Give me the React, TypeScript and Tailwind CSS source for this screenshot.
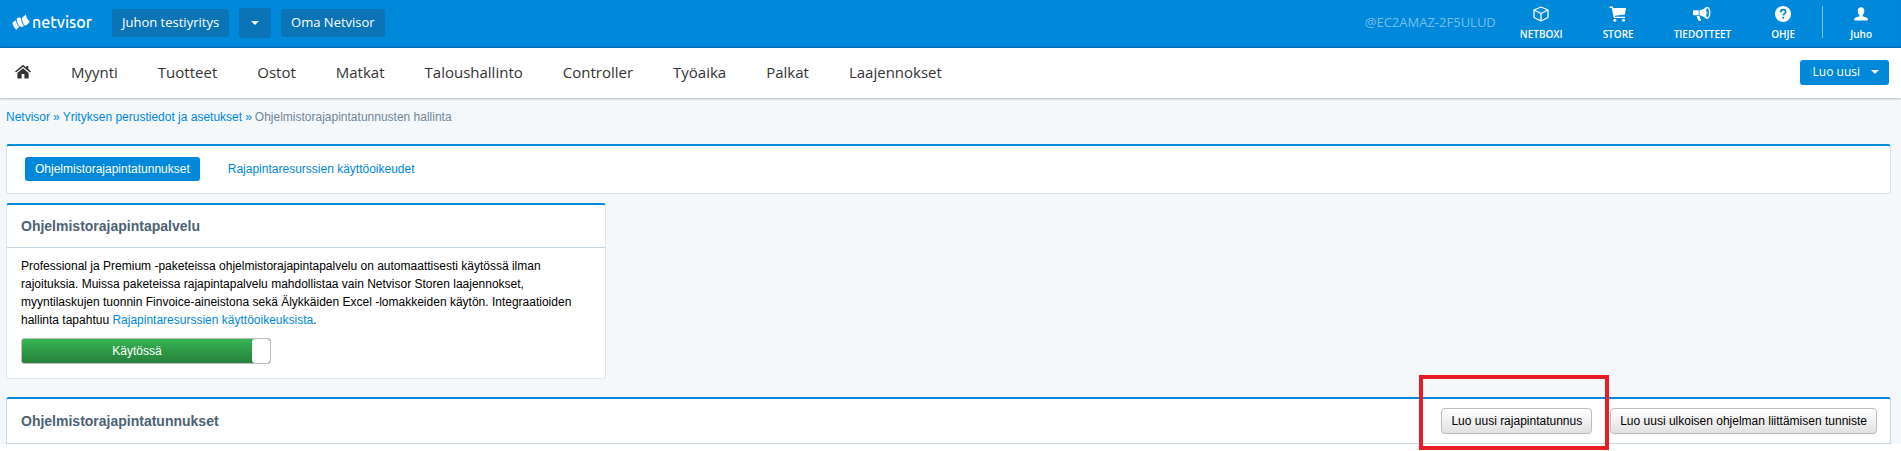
import type { ReactNode } from 'react';

const navItems = ['Myynti', 'Tuotteet', 'Ostot', 'Matkat', 'Taloushallinto', 'Controller', 'Työaika', 'Palkat', 'Laajennokset'];

function Caret() {
  return (
    <svg className="w-2 h-1" viewBox="0 0 8 4" fill="currentColor" aria-hidden="true">
      <path d="M0 0h8L4 4z" />
    </svg>
  );
}

function LogoMark() {
  return (
    <svg className="w-[18px] h-4" viewBox="0 0 18 16" fill="currentColor" aria-hidden="true">
      <path d="M.4 8.600 4 6.200C4.300 9 5.400 11.400 7.200 12.800L4.400 15.700C2.200 14 .8 11.500.4 8.600z" />
      <path d="M4.700 4.600C6.100 3.200 7.800 3 9 4.200c.3 3.200 1.200 5.700 2.900 7.700-1.300 1.200-2.900 1.400-4.100.6C5.900 10.700 4.800 7.900 4.700 4.600z" />
      <path d="M9.800 3.900 13.900.5c.2 2.700 1.400 5 3.700 6.700-.4 1.800-1.900 3.500-4.700 4.500-1.900-2-2.900-4.600-3.100-7.800z" />
    </svg>
  );
}

function HomeIcon() {
  return (
    <svg className="w-4 h-4" viewBox="0 0 16 16" fill="currentColor" aria-hidden="true">
      <path d="M8 .7 0 7.400l1 1.200L8 2.800l7 5.800 1-1.200-2.700-2.300V2h-2v1.400z" />
      <path d="M8 4.300 2.400 9V14.500h4.200V10h2.800v4.500h4.200V9z" />
    </svg>
  );
}

function BoxIcon() {
  return (
    <svg className="w-4 h-4" viewBox="0 0 16 16" fill="none" stroke="currentColor" strokeWidth="1.300" strokeLinejoin="round" aria-hidden="true">
      <path d="M8 1 15 4v7.500L8 15 1 11.500V4zM1 4l7 3.500L15 4M8 7.500V15" />
    </svg>
  );
}

function CartIcon() {
  return (
    <svg className="w-[18px] h-4" viewBox="0 0 18 16" fill="currentColor" aria-hidden="true">
      <path d="M.5.500h3.300l.5 1.500H17l-1 6.500L5.800 9.700l.2 1h10v1.300H4.800L2.700 1.900H.5z" />
      <circle cx="5.800" cy="14.200" r="1.500" />
      <circle cx="14.500" cy="14.200" r="1.500" />
    </svg>
  );
}

function HornIcon() {
  return (
    <svg className="w-[18px] h-4" viewBox="0 0 18 16" fill="currentColor" aria-hidden="true">
      <path d="M1 4.300h4.700v5H1c-.6 0-1-.4-1-1v-3c0-.6.400-1 1-1z" />
      <path d="M6.500 4.200C9 4 11 3 12.800 1.200v11.300C11 10.700 9 9.600 6.500 9.400z" />
      <path d="M3.600 10h2.800l1.800 4.700H5.400z" />
      <path fillRule="evenodd" d="M14.200.7c1.900 0 3.200 2.600 3.200 6.100s-1.300 6.100-3.200 6.100-2.900-2.600-2.900-6.100.9-6.100 2.900-6.100zm.3 1.500c-.9 0-1.500 2-1.500 4.600s.6 4.600 1.500 4.600 1.500-2 1.500-4.600-.6-4.600-1.500-4.600z" />
      <path d="M13.500 5.200c1.300.3 1.300 3 0 3.300z" />
    </svg>
  );
}

function HelpIcon() {
  return (
    <svg className="w-4 h-4" viewBox="0 0 16 16" aria-hidden="true">
      <circle cx="8" cy="8" r="8" fill="currentColor" />
      <path d="M5.600 6.200C5.600 4.600 6.600 3.700 8.100 3.700s2.500.9 2.500 2.200c0 1.700-2.300 1.800-2.300 3.600" fill="none" stroke="#0088db" strokeWidth="1.700" />
      <circle cx="8.200" cy="11.800" r="1.100" fill="#0088db" />
    </svg>
  );
}

function UserIcon() {
  return (
    <svg className="w-4 h-4" viewBox="0 0 16 16" fill="currentColor" aria-hidden="true">
      <path d="M8 1.200c2.100 0 3.300 1.500 3.300 3.700 0 1.700-.7 3.300-1.700 4.100v1.200l4.100 1.500c.8.300 1.100.9 1.100 1.600V14.500H1.200v-1.200c0-.7.300-1.300 1.100-1.600l4.100-1.500V9C5.400 8.200 4.700 6.600 4.700 4.900c0-2.200 1.200-3.700 3.300-3.700z" />
    </svg>
  );
}

function TopLink({ icon, label }: { icon: ReactNode; label: string }) {
  return (
    <a href="#" className="flex flex-col items-center gap-1 text-[10px] leading-4 font-semibold text-white">
      {icon}
      {label}
    </a>
  );
}

function PanelTitle({ children }: { children: ReactNode }) {
  return <h2 className="text-sm leading-5 font-bold text-[#4c6275]">{children}</h2>;
}

function GreyButton({ children }: { children: ReactNode }) {
  return (
    <button className="h-[26px] px-[9px] rounded-sm border border-[#bcbcbc] bg-linear-to-b from-white to-[#e1e1e1] text-xs text-black shadow-xs">
      {children}
    </button>
  );
}

export default function App() {
  return (
    <div className="bg-white pb-2 font-['Liberation_Sans',Arial,sans-serif] text-xs text-black">

      {/* Top bar */}
      <header className="flex h-12 items-center bg-[#0088db] pl-3 pr-[29px] font-['Open_Sans',sans-serif] text-white shadow-[inset_0_-2px_2px_-1px_#0068a8]">
        <a href="#" className="flex w-25 items-center gap-0.5 pb-1">
          <LogoMark />
          <span className="font-[Ubuntu,'Noto_Sans',sans-serif] text-base leading-5 font-medium">netvisor</span>
        </a>
        <div className="flex items-center gap-[10px] pb-0.5 text-[13px] leading-5">
          <button className="h-7 rounded-[3px] bg-[#0a74b6] px-[10px] pb-0.5">Juhon testiyritys</button>
          <button className="flex h-[30px] w-8 items-center justify-center rounded-[3px] bg-[#0a74b6]" aria-label="Vaihda yritys">
            <Caret />
          </button>
          <button className="h-7 rounded-[3px] bg-[#0a74b6] px-[10px] pb-0.5">Oma Netvisor</button>
        </div>
        <div className="ml-auto flex items-center">
          <span className="mr-6 pb-1 text-[13px] leading-5 text-[#77c0ee]">@EC2AMAZ-2F5ULUD</span>
          <div className="flex items-center gap-10">
            <TopLink icon={<BoxIcon />} label="NETBOXI" />
            <TopLink icon={<CartIcon />} label="STORE" />
            <TopLink icon={<HornIcon />} label="TIEDOTTEET" />
            <TopLink icon={<HelpIcon />} label="OHJE" />
          </div>
          <div className="mx-[27px] mb-1 h-8 w-px bg-[#80c3ed]" />
          <TopLink icon={<UserIcon />} label="Juho" />
        </div>
      </header>

      {/* Main navigation */}
      <nav className="relative flex h-[50px] items-center bg-white pb-0.5 pl-[15px] pr-3 font-['Open_Sans',sans-serif] text-[#333] shadow-[0_1px_2px_rgba(0,0,0,0.25)]">
        <a href="#" aria-label="Etusivu"><HomeIcon /></a>
        <div className="ml-10 flex items-center gap-10 text-[15px] leading-5">
          {navItems.map((item) => (
            <a key={item} href="#">{item}</a>
          ))}
        </div>
        <button className="ml-auto flex h-[25px] items-center gap-[11px] rounded-[3px] bg-[#0088db] pl-[13px] pr-[10px] text-[12px] text-white">
          Luo uusi
          <Caret />
        </button>
      </nav>

      <main className="bg-[#f4f8fb] pl-1.5 pr-[10px]">
        {/* Breadcrumb */}
        <div className="flex h-[46px] items-center gap-[3px] pb-2 text-[#0088db]">
          <a href="#">Netvisor</a>
          <span>»</span>
          <a href="#">Yrityksen perustiedot ja asetukset</a>
          <span>»</span>
          <span className="text-[#70879a]">Ohjelmistorajapintatunnusten hallinta</span>
        </div>

        {/* Tabs */}
        <div className="flex h-[50px] items-center gap-[18px] rounded-[3px] border border-t-2 border-[#dde1e4] border-t-[#0088db] bg-white pl-[18px] pb-px">
          <a href="#" className="rounded-[3px] bg-[#0088db] px-[10px] py-1 leading-4 text-white">Ohjelmistorajapintatunnukset</a>
          <a href="#" className="px-[10px] py-1 leading-4 text-[#0088db]">Rajapintaresurssien käyttöoikeudet</a>
        </div>

        {/* Service panel */}
        <section className="mt-[9px] w-150 rounded-[3px] border border-t-2 border-[#dfe7ee] border-t-[#0088db] bg-white">
          <div className="flex h-[43px] items-center border-b border-[#c6d5e0] px-[14px]">
            <PanelTitle>Ohjelmistorajapintapalvelu</PanelTitle>
          </div>
          <div className="px-[14px] pt-[9px] pb-[14px]">
            <p className="leading-[18px]">
              Professional ja Premium -paketeissa ohjelmistorajapintapalvelu on automaattisesti käytössä ilman
              rajoituksia. Muissa paketeissa rajapintapalvelu mahdollistaa vain Netvisor Storen laajennokset,
              myyntilaskujen tuonnin Finvoice-aineistona sekä Älykkäiden Excel -lomakkeiden käytön. Integraatioiden
              hallinta tapahtuu <a href="#" className="text-[#0088db]">Rajapintaresurssien käyttöoikeuksista</a>.
            </p>
            <button role="switch" aria-checked="true" className="mt-[9px] flex h-[26px] w-[250px] overflow-hidden rounded-[3px] border border-[#bdbdbd] bg-linear-to-b from-[#34b452] to-[#27813c] text-white">
              <span className="flex h-full flex-1 items-center justify-center">Käytössä</span>
              <span className="h-full w-[18px] rounded-[3px] bg-white" />
            </button>
          </div>
        </section>

        {/* Identifiers panel */}
        <section className="mt-[18px] rounded-t-[3px] border border-t-2 border-[#cbd8df] border-t-[#0088db] bg-white">
          <div className="flex h-11 items-center justify-between pl-[14px] pr-[13px]">
            <PanelTitle>Ohjelmistorajapintatunnukset</PanelTitle>
            <div className="flex gap-[18px]">
              <div className="relative flex">
                <GreyButton>Luo uusi rajapintatunnus</GreyButton>
                {/* Highlight around the create button */}
                <div className="pointer-events-none absolute -top-[33px] -right-[17px] -bottom-4 -left-[22px] border-4 border-[#e81c22]" />
              </div>
              <GreyButton>Luo uusi ulkoisen ohjelman liittämisen tunniste</GreyButton>
            </div>
          </div>
        </section>
      </main>
    </div>
  );
}
